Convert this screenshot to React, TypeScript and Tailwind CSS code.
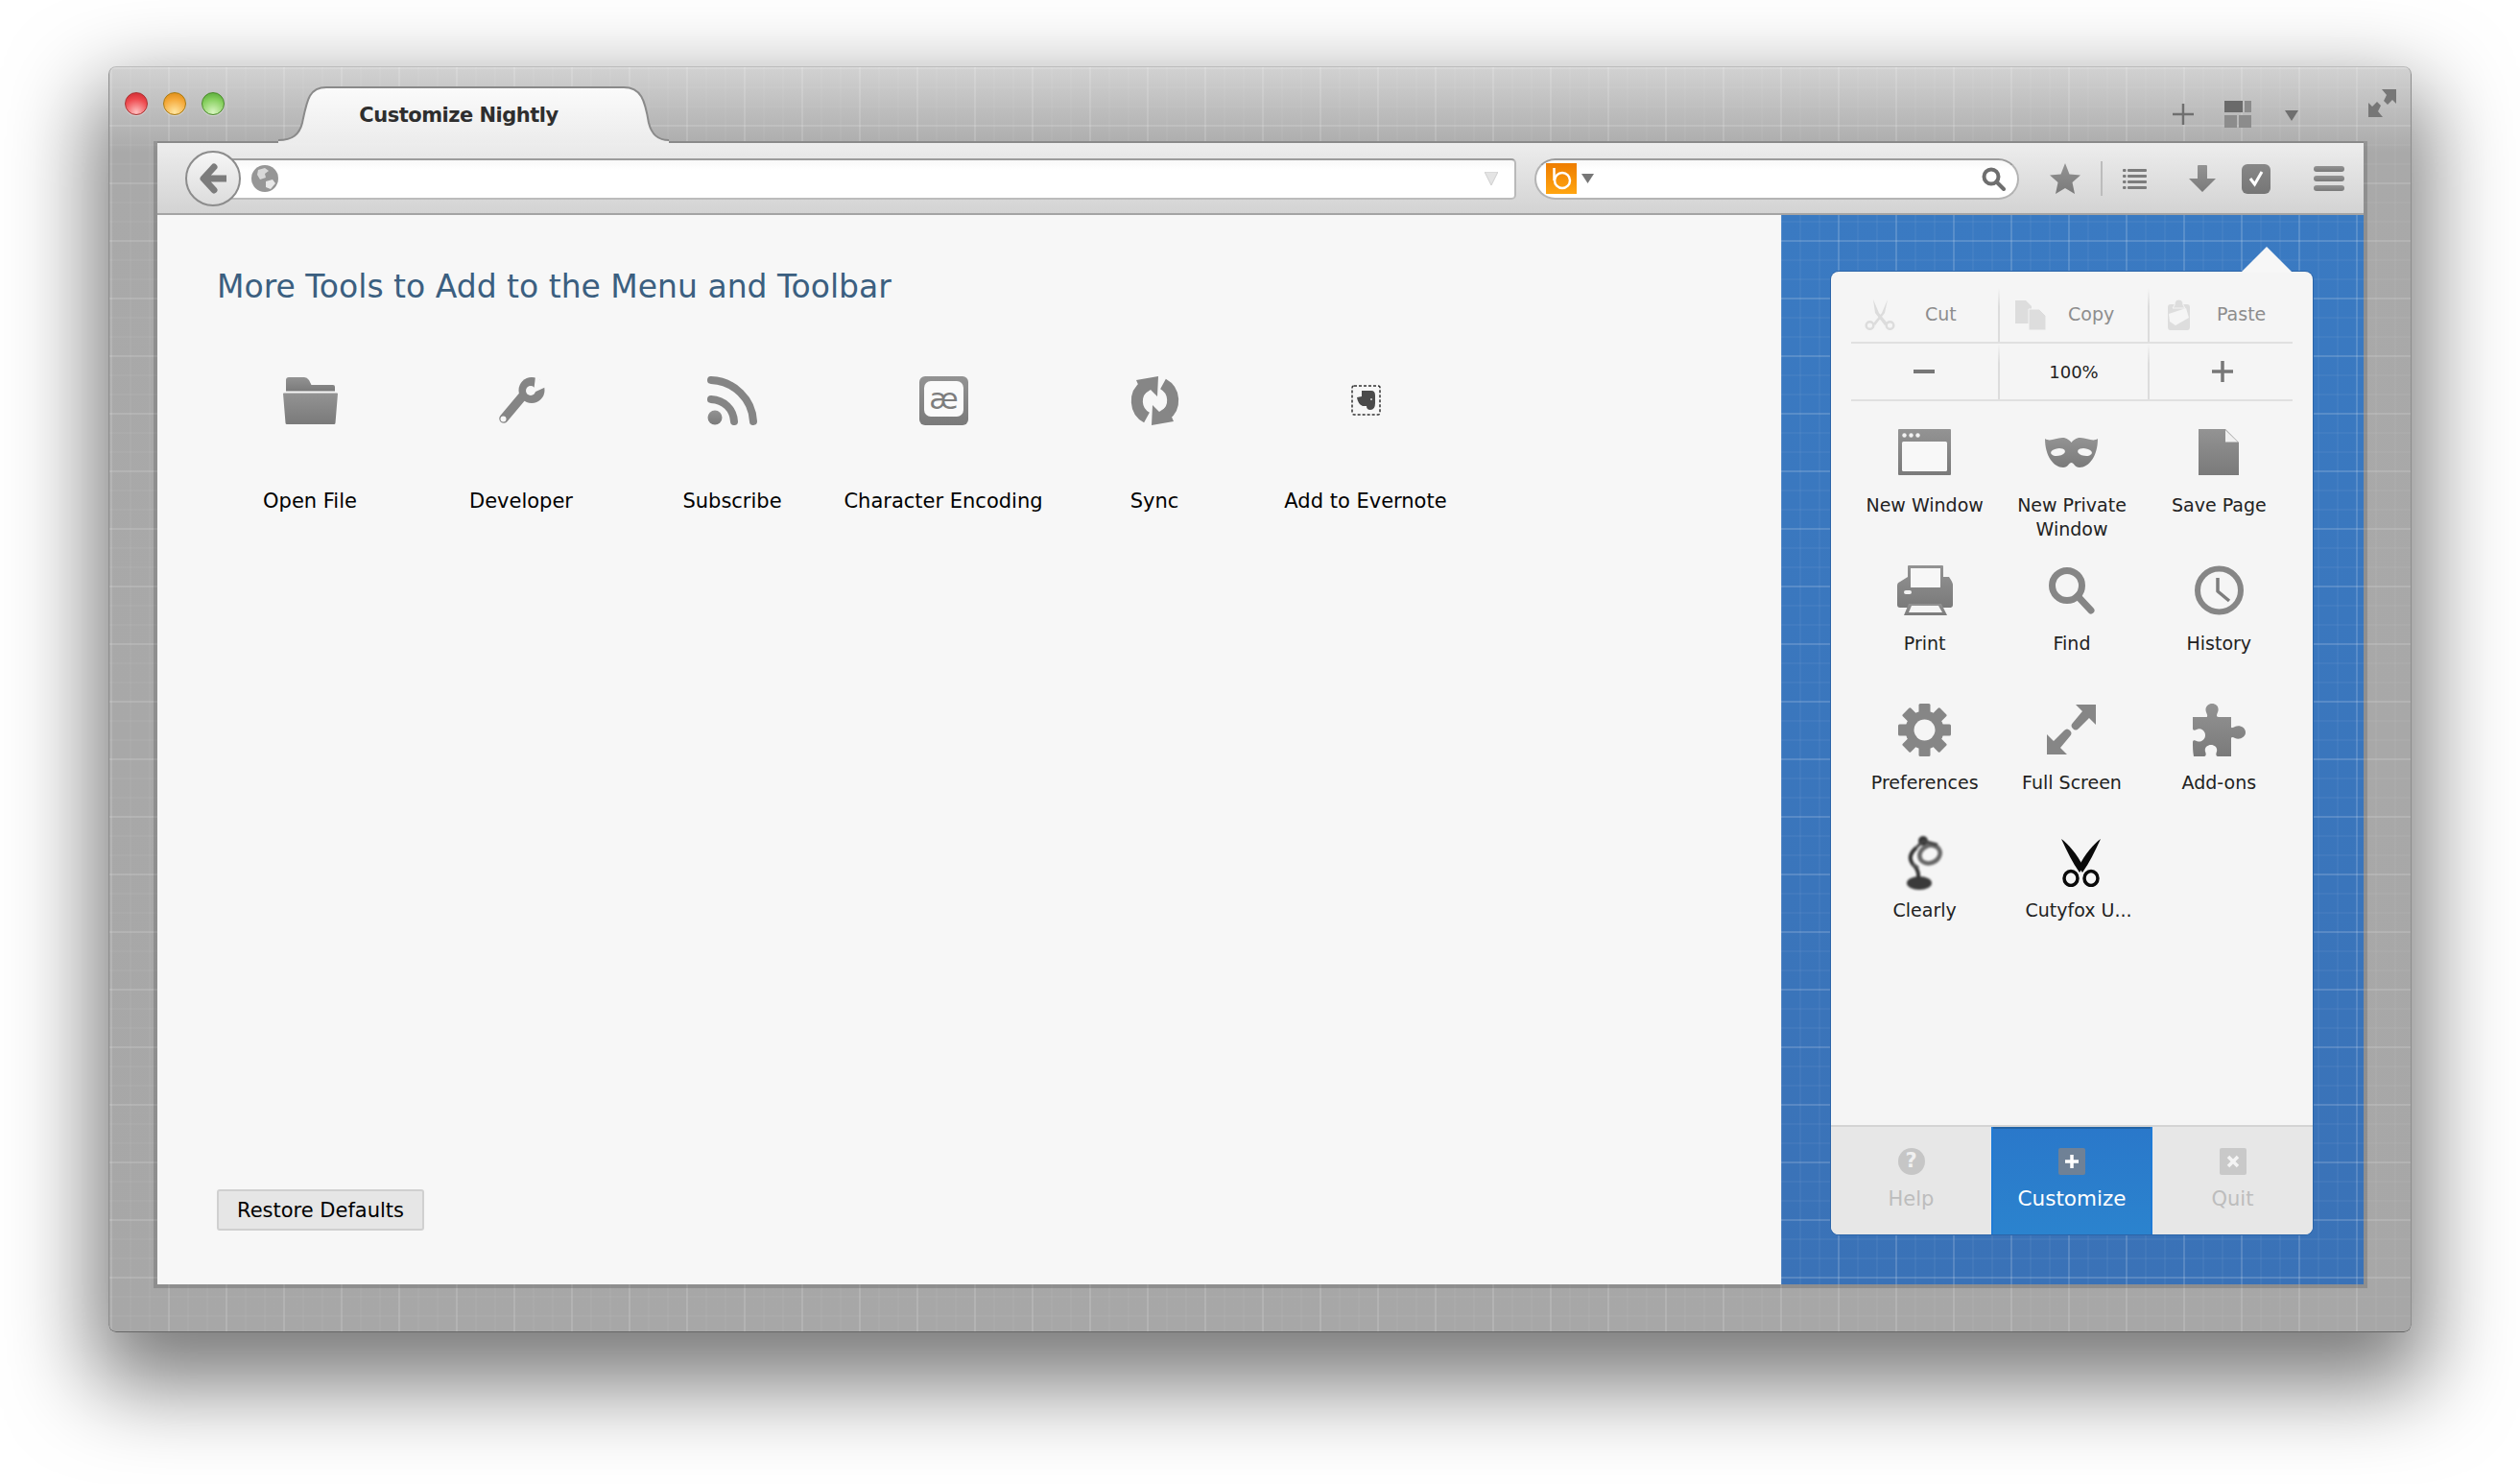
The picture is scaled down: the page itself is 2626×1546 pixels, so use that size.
import React from "react";

const G = "url(#ig)";
const Defs = () => (
  <svg className="absolute h-0 w-0" aria-hidden="true">
    <defs>
      <linearGradient id="ig" x1="0" y1="0" x2="0" y2="1">
        <stop offset="0" stopColor="#939393" />
        <stop offset="1" stopColor="#7a7a7a" />
      </linearGradient>
      <linearGradient id="tabg" x1="0" y1="0" x2="0" y2="1">
        <stop offset="0" stopColor="#fbfbfb" />
        <stop offset="1" stopColor="#ececec" />
      </linearGradient>
      <linearGradient id="bing" x1="0" y1="0" x2="0" y2="1">
        <stop offset="0" stopColor="#ee7d00" />
        <stop offset="1" stopColor="#ffa510" />
      </linearGradient>
    </defs>
  </svg>
);

const S = ({ w, h, children, className }: { w: number; h: number; children: React.ReactNode; className?: string }) => (
  <svg width={w} height={h} viewBox={`0 0 ${w} ${h}`} className={"block shrink-0 " + (className ?? "")}>
    {children}
  </svg>
);

/* content icons */
const Folder = () => (
  <S w={57} h={49}>
    <path d="M3 3Q3 0 6 0H22Q25 0 27 3L29.5 8H52Q54 8 54 10V14.5H3Z" fill={G} />
    <path d="M0 17Q0 16.5 1 16.5H56Q57 16.5 57 17L54.5 47.5Q54.5 49 53 49H4Q2.500 49 2.500 47.500Z" fill={G} />
  </S>
);
const Wrench = () => (
  <S w={49} h={49}>
    <path d="M6 43L27 18" stroke="#858585" strokeWidth="9.500" strokeLinecap="round" />
    <circle cx="35" cy="13.500" r="13.500" fill="#858585" />
    <path d="M39 -1L52 9L37 16Z" fill="#f7f7f7" />
    <circle cx="34" cy="14" r="5" fill="#f7f7f7" />
    <circle cx="5.500" cy="43.500" r="3" fill="#f7f7f7" />
  </S>
);
const Rss = () => (
  <S w={52} h={51}>
    <circle cx="8" cy="43" r="7.500" fill={G} />
    <path d="M4 24C18 25 27 34 28 47" stroke="#858585" strokeWidth="8" strokeLinecap="round" fill="none" />
    <path d="M4 4C28 5 47 24 48 47" stroke="#858585" strokeWidth="8" strokeLinecap="round" fill="none" />
  </S>
);
const Encoding = () => (
  <S w={51} h={51}>
    <rect width="51" height="51" rx="6" fill={G} />
    <rect x="5" y="5" width="41" height="37" rx="7" fill="#fafafa" />
    <text x="25.500" y="34" textAnchor="middle" fontFamily="DejaVu Sans" fontSize="31" fill="#7d7d7d">æ</text>
  </S>
);
const SyncHalf = () => (
  <>
    <path d="M17 43A19.500 19.500 0 0 1 15 10" stroke="#868686" strokeWidth="12" fill="none" />
    <path d="M6 4L29 0L28 21L21 14Q16 17 13 20Z" fill="#868686" />
  </>
);
const Sync = () => (
  <S w={51} h={51}>
    <SyncHalf />
    <g transform="rotate(180 25.5 25.500)">
      <SyncHalf />
    </g>
  </S>
);
const Evernote = () => (
  <S w={31} h={32}>
    <rect x="1" y="1" width="29" height="30" rx="2" fill="none" stroke="#333" strokeWidth="1.500" strokeDasharray="3 2" />
    <path d="M11 6H21Q25 6 25 11V19Q25 26 20 26Q16 26 16 22H12Q7 20 6 13L11 12Z" fill="#4a4a4a" />
    <circle cx="21" cy="15" r="1" fill="#ddd" />
  </S>
);

/* panel icons */
const NewWindow = () => (
  <S w={55} h={48}>
    <rect width="55" height="48" rx="1" fill={G} />
    <rect x="4" y="13" width="47" height="31" rx="1.500" fill="#f8f8f8" />
    <circle cx="6.500" cy="6.500" r="2.200" fill="#f2f2f2" />
    <circle cx="13.500" cy="6.500" r="2.200" fill="#f2f2f2" />
    <circle cx="20.500" cy="6.500" r="2.200" fill="#f2f2f2" />
  </S>
);
const Mask = () => (
  <S w={55} h={32}>
    <path d="M0 2C6 6 12 0 20 1C24 2 26 4 27.500 6C29 4 31 2 35 1C43 0 49 6 55 2C55 20 46 32 36 32C31 32 30 27 27.500 27C25 27 24 32 19 32C9 32 0 20 0 2Z" fill={G} />
    <ellipse cx="13.500" cy="16" rx="7.500" ry="3.800" transform="rotate(-8 13.5 16)" fill="#f5f5f5" />
    <ellipse cx="41.500" cy="16" rx="7.500" ry="3.800" transform="rotate(8 41.5 16)" fill="#f5f5f5" />
  </S>
);
const Page = () => (
  <S w={42} h={48}>
    <path d="M0 0H28L42 14V48H0Z" fill={G} />
    <path d="M28 1L41 13.500H28Z" fill="#f0f0f0" />
  </S>
);
const Printer = () => (
  <S w={58} h={52}>
    <path d="M11 1Q11 0 12 0H47Q48 0 48 1V12H54Q58 18 58 20V41Q58 44 55 44H3Q0 44 0 41V21Q0 18 3 17L11 12Z" fill={G} />
    <rect x="14" y="3" width="31" height="20" fill="#f7f7f7" />
    <rect x="7" y="26" width="8" height="4" rx="2" fill="#f2f2f2" />
    <path d="M12 40H46L52 52H7Z" fill={G} />
    <path d="M15 42H43L47 49H12Z" fill="#f5f5f5" />
  </S>
);
const Find = () => (
  <S w={48} h={49}>
    <circle cx="19" cy="19" r="15.500" fill="none" stroke="#868686" strokeWidth="7" />
    <path d="M30 30L44 45" stroke="#858585" strokeWidth="7" strokeLinecap="round" />
  </S>
);
const Clock = () => (
  <S w={51} h={52}>
    <circle cx="25.500" cy="26" r="22.500" fill="none" stroke="#868686" strokeWidth="6" />
    <path d="M24 13V27L36 37" fill="none" stroke="#7d7d7d" strokeWidth="3.500" strokeLinejoin="round" />
  </S>
);
const Gear = () => (
  <S w={55} h={55}>
    {[0, 45, 90, 135].map((a) => (
      <rect key={a} x="21.500" y="0" width="12" height="55" rx="1.500" fill="#868686" transform={`rotate(${a} 27.5 27.5)`} />
    ))}
    <circle cx="27.500" cy="27.500" r="20" fill="#868686" />
    <circle cx="27.500" cy="27.500" r="11" fill="#f5f5f5" />
  </S>
);
const FullScreen = () => (
  <S w={51} h={52}>
    <path d="M30 0H51V21L44 14L33 25C31 27 29 27 27 25C25 23 25 21 27 19L37 7Z" fill="#868686" />
    <path d="M30 0H51V21L44 14L33 25C31 27 29 27 27 25C25 23 25 21 27 19L37 7Z" fill="#868686" transform="rotate(180 25.5 26)" />
  </S>
);
const Puzzle = () => (
  <S w={55} h={55}>
    <path d="M0 14H14C16 14 15 11 14 9C12 4 16 0 20 0C25 0 28 4 26 9C25 11 24 14 27 14H40V24C40 26 42 25 44 24C49 22 55 25 55 30C55 35 49 38 44 36C42 35 40 34 40 37V55H26C24 55 24 52 25 50C26 46 23 43 19 43C15 43 12 46 13 50C14 52 14 55 12 55H1C0 50 0 45 0 40C0 38 2 38 4 39C9 41 13 37 13 33C13 28 8 25 4 27C2 28 0 28 0 26Z" fill={G} />
  </S>
);
const Lamp = () => (
  <S w={41} h={57} className="blur-[1px]">
    <ellipse cx="15" cy="50" rx="13" ry="7" fill="#3a3a3a" />
    <path d="M14 45Q15 36 8 30Q2 22 12 13" fill="none" stroke="#333" strokeWidth="4" />
    <path d="M8 30L14 34" stroke="#555" strokeWidth="3" />
    <circle cx="19" cy="6" r="5" fill="#333" />
    <ellipse cx="26" cy="20" rx="11" ry="9" transform="rotate(-25 26 20)" fill="none" stroke="#666" strokeWidth="4.500" />
    <path d="M12 13L19 6L34 10" fill="none" stroke="#444" strokeWidth="3" />
  </S>
);
const Cutyfox = () => (
  <S w={41} h={52}>
    <path d="M0 2C7 7 16 17 23 31L19 37C12 27 6 15 0 2Z" fill="#0a0a0a" />
    <path d="M41 2C34 7 25 17 18 31L22 37C29 27 35 15 41 2Z" fill="#0a0a0a" />
    <ellipse cx="10" cy="43" rx="7" ry="7.500" fill="none" stroke="#0a0a0a" strokeWidth="3.500" />
    <ellipse cx="31" cy="43" rx="7" ry="7.500" fill="none" stroke="#0a0a0a" strokeWidth="3.500" />
  </S>
);
const CutIcon = () => (
  <S w={32} h={32}>
    <path d="M9 0L15 14L24 25L21 27L11 14Z" fill="#dcdcdc" />
    <path d="M24 0L18 14L9 25L11 27L21 14Z" fill="#dcdcdc" />
    <circle cx="5.500" cy="27" r="3.800" fill="none" stroke="#dcdcdc" strokeWidth="2.500" />
    <circle cx="26.500" cy="27" r="3.800" fill="none" stroke="#dcdcdc" strokeWidth="2.500" />
  </S>
);
const CopyIcon = () => (
  <S w={32} h={31}>
    <path d="M0 0H11L17 6V24H0Z" fill="#dddddd" />
    <path d="M14 9H25L32 16V31H14Z" fill="#dddddd" stroke="#f5f5f5" strokeWidth="1" />
  </S>
);
const PasteIcon = () => (
  <S w={23} h={32}>
    <rect y="5" width="23" height="27" rx="3" fill="#dddddd" />
    <path d="M7 6Q7 0 11.500 0Q16 0 16 6L18 9H5Z" fill="#dddddd" stroke="#f5f5f5" strokeWidth="1" />
    <path d="M1 15L19 9L22 19L8 27L2 23Z" fill="#f5f5f5" />
  </S>
);

type Tool = { label: React.ReactNode; icon: React.ReactNode; tight?: boolean };

const contentTools: { label: string; icon: React.ReactNode }[] = [
  { label: "Open File", icon: <Folder /> },
  { label: "Developer", icon: <Wrench /> },
  { label: "Subscribe", icon: <Rss /> },
  { label: "Character Encoding", icon: <Encoding /> },
  { label: "Sync", icon: <Sync /> },
  { label: "Add to Evernote", icon: <Evernote /> },
];

const panelTools: Tool[] = [
  { label: "New Window", icon: <NewWindow /> },
  { label: <>New Private<br />Window</>, icon: <Mask /> },
  { label: "Save Page", icon: <Page /> },
  { label: "Print", icon: <Printer /> },
  { label: "Find", icon: <Find /> },
  { label: "History", icon: <Clock /> },
  { label: "Preferences", icon: <Gear /> },
  { label: "Full Screen", icon: <FullScreen /> },
  { label: "Add-ons", icon: <Puzzle /> },
  { label: "Clearly", icon: <Lamp />, tight: true },
  { label: <span className="pl-[14px]">Cutyfox U...</span>, icon: <span className="ml-[19px]"><Cutyfox /></span>, tight: true },
];

const VDivider = () => (
  <div className="w-[2px] shrink-0 self-stretch bg-[linear-gradient(to_bottom,transparent,#dcdcdc_35%,#dcdcdc)]" />
);

export default function App() {
  return (
    <div className="relative h-[1546px] w-[2626px] overflow-hidden bg-white pl-[113px] pt-[69px] font-['DejaVu_Sans',sans-serif]">
      <Defs />
      {/* window */}
      <div className="flex h-[1319px] w-[2400px] flex-col rounded-[8px] pl-[47px] pr-[46px] shadow-[0_40px_90px_15px_rgba(0,0,0,0.52),inset_0_1px_0_#bdbdbd,inset_0_-1px_0_#666666,inset_1px_0_0_#8e8e8e,inset_-1px_0_0_#8e8e8e] bg-[linear-gradient(to_right,rgba(255,255,255,0.1)_2px,transparent_2px),linear-gradient(to_bottom,rgba(255,255,255,0.1)_2px,transparent_2px),linear-gradient(to_right,rgba(255,255,255,0.035)_2px,transparent_2px),linear-gradient(to_bottom,rgba(255,255,255,0.035)_2px,transparent_2px),linear-gradient(to_bottom,#d2d2d2,#a9a9a9_90px,#a7a7a7)] [background-size:60px_60px,60px_60px,20px_20px,20px_20px,100%_100%] [background-position:2px_1px,2px_1px,2px_1px,2px_1px,0_0]">
        {/* title bar */}
        <div className="-ml-[47px] -mr-[46px] flex h-[78px] shrink-0 items-start pl-[17px] pr-[16px]">
          <div className="mt-[27px] flex gap-[16px]">
            <div className="h-[24px] w-[24px] rounded-full border border-[#a33] bg-[radial-gradient(circle_at_50%_90%,#ffc0c0,#ee4a4f_60%,#c8252c)] shadow-[0_1px_0_rgba(255,255,255,0.4)]" />
            <div className="h-[24px] w-[24px] rounded-full border border-[#a97a10] bg-[radial-gradient(circle_at_50%_90%,#ffe6a0,#f5a93a_60%,#d8860f)] shadow-[0_1px_0_rgba(255,255,255,0.4)]" />
            <div className="h-[24px] w-[24px] rounded-full border border-[#4a8a2a] bg-[radial-gradient(circle_at_50%_90%,#d8f5c0,#86cf5e_60%,#4fa332)] shadow-[0_1px_0_rgba(255,255,255,0.4)]" />
          </div>
          <div className="relative z-10 ml-[56px] mt-[21px] flex h-[59px] w-[407px] shrink-0 items-center justify-center pr-[31px] pt-[3px]">
            <svg width="407" height="59" viewBox="0 0 407 59" className="absolute inset-0">
              <path d="M0 56C15 56 22 50 25 38C30 14 32 1 50 1H360C378 1 382 14 386 38C389 50 395 56 407 56V59H0Z" fill="url(#tabg)" />
              <path d="M0 56C15 56 22 50 25 38C30 14 32 1 50 1H360C378 1 382 14 386 38C389 50 395 56 407 56" fill="none" stroke="#8a8a8a" strokeWidth="2" />
            </svg>
            <span className="relative text-[21px] font-bold tracking-[-0.5px] text-[#2e2e2e]">Customize Nightly</span>
          </div>
          <div className="flex-1" />
          <div className="mt-[39px]">
            <S w={22} h={22}>
              <path d="M11 0V22M0 11H22" stroke="#6f6f6f" strokeWidth="2.500" />
            </S>
          </div>
          <div className="ml-[32px] mt-[36px]">
            <S w={28} h={28}>
              <rect x="0" y="0" width="19" height="12" fill="#6a6a6a" />
              <rect x="21" y="0" width="7" height="12" fill="#8c8c8c" />
              <rect x="0" y="15" width="13" height="13" fill="#8c8c8c" />
              <rect x="15" y="15" width="13" height="13" fill="#8c8c8c" />
            </S>
          </div>
          <div className="ml-[35px] mt-[46px]">
            <S w={14} h={11}>
              <path d="M0 0H14L7 11Z" fill="#6f6f6f" />
            </S>
          </div>
          <div className="ml-[73px] mt-[24px]">
            <S w={29} h={29}>
              <path d="M14 0H29V15L25 11L20 16L16 12L19 6Z" fill="#777" />
              <path d="M15 29H0V14L4 18L9 13L13 17L10 23Z" fill="#777" />
            </S>
          </div>
        </div>

        {/* inner frame */}
        <div className="flex h-[1195px] shrink-0 flex-col border-x-4 border-b-4 border-black/15">
          {/* toolbar */}
          <div className="flex h-[77px] shrink-0 items-center border-y-2 border-t-[#8a8a8a] border-b-[#a4a4a4] bg-[linear-gradient(to_bottom,#ededed,#d3d3d3)] pl-[29px] pt-[1px]">
            <div className="relative z-10 flex h-[58px] w-[58px] shrink-0 items-center justify-center rounded-full border-2 border-[#8c8c8c] bg-[linear-gradient(to_bottom,#f6f6f6,#dcdcdc)]">
              <S w={28} h={32}>
                <path d="M27 16H6M15 4L4 16L15 28" fill="none" stroke="#7c7c7c" strokeWidth="7" strokeLinejoin="round" strokeLinecap="round" />
              </S>
            </div>
            <div className="-ml-[21px] flex h-[43px] w-[1350px] shrink-0 items-center rounded-r-[5px] border-y-2 border-r-2 border-t-[#9c9c9c] border-r-[#b9b9b9] border-b-[#bcbcbc] bg-[linear-gradient(to_bottom,#f8f8f8,#ffffff_25%)] pl-[32px] pr-[17px]">
              <S w={28} h={28}>
                <circle cx="14" cy="14" r="14" fill="#969696" />
                <path d="M7 5L14 3L18 6L14 9L15 13L9 15L6 10Z" fill="#d9d9d9" />
                <path d="M15 17L22 15L25 19L20 25L15 23Z" fill="#e8e8e8" />
              </S>
              <div className="flex-1" />
              <S w={14} h={14}>
                <path d="M0 0H14L7 14Z" fill="#e4e4e4" stroke="#cfcfcf" strokeWidth="1" />
              </S>
            </div>
            <div className="ml-[19px] flex h-[43px] w-[505px] shrink-0 items-center rounded-full border-2 border-[#b4b4b4] border-t-[#9c9c9c] bg-[linear-gradient(to_bottom,#f8f8f8,#ffffff_25%)] pl-[10px] pr-[12px]">
              <S w={32} h={32}>
                <rect width="32" height="32" fill="url(#bing)" />
                <circle cx="17" cy="18" r="8" fill="none" stroke="#fff" strokeWidth="2.500" />
                <path d="M8.500 5V18" stroke="#fff" strokeWidth="2.500" />
              </S>
              <div className="ml-[5px]">
                <S w={13} h={10}>
                  <path d="M0 0H13L6.500 10Z" fill="#777" />
                </S>
              </div>
              <div className="flex-1" />
              <S w={25} h={25}>
                <circle cx="10" cy="10" r="7.500" fill="none" stroke="#6e6e6e" strokeWidth="4" />
                <path d="M15.500 15.500L23 23" stroke="#6e6e6e" strokeWidth="4" strokeLinecap="round" />
              </S>
            </div>
            <div className="ml-[32px]">
              <S w={32} h={32}>
                <path d="M16 0L20.500 11.500L32 12.500L23.500 20L26 32L16 26L6 32L8.500 20L0 12.500L11.500 11.500Z" fill={G} />
              </S>
            </div>
            <div className="ml-[21px] h-[36px] w-[2px] bg-[#bcbcbc]" />
            <div className="ml-[21px]">
              <S w={25} h={21}>
                {[0, 6, 12, 18].map((y) => (
                  <g key={y}>
                    <rect x="0" y={y} width="3.500" height="3" rx="1" fill="#7c7c7c" />
                    <rect x="5" y={y} width="20" height="3" rx="1" fill="#7c7c7c" />
                  </g>
                ))}
              </S>
            </div>
            <div className="ml-[44px]">
              <S w={28} h={28}>
                <path d="M9 1Q9 0 10 0H18Q19 0 19 1V14H28L14 28L0 14H9Z" fill={G} />
              </S>
            </div>
            <div className="ml-[27px] flex h-[31px] w-[30px] items-center justify-center rounded-[6px] bg-[linear-gradient(to_bottom,#878787,#767676)]">
              <S w={20} h={18}>
                <path d="M4 9L8.500 15L16 2" fill="none" stroke="#fff" strokeWidth="3" />
              </S>
            </div>
            <div className="ml-[45px]">
              <S w={32} h={26}>
                <rect y="0" width="32" height="6" rx="3" fill={G} />
                <rect y="10" width="32" height="6" rx="3" fill={G} />
                <rect y="20" width="32" height="6" rx="3" fill={G} />
              </S>
            </div>
          </div>

          {/* body */}
          <div className="flex min-h-0 flex-1">
            {/* main content */}
            <div className="flex w-[1692px] shrink-0 flex-col bg-[#f7f7f7] pb-[56px] pl-[62px]">
              <h1 className="mt-[55px] text-[33px] font-normal leading-[40px] text-[#3b5f80]">
                More Tools to Add to the Menu and Toolbar
              </h1>
              <div className="-ml-[13px] mt-[72px] flex">
                {contentTools.map((t) => (
                  <div key={t.label} className="flex w-[220px] flex-col items-center">
                    <div className="flex h-[52px] items-center justify-center">{t.icon}</div>
                    <div className="mt-[66px] whitespace-nowrap text-[21px] leading-[26px] text-black">{t.label}</div>
                  </div>
                ))}
              </div>
              <button className="mt-auto h-[43px] w-[216px] rounded-[3px] border-2 border-[#d0d0d0] bg-[#e6e6e6] pt-[2px] text-[21px] text-black">
                Restore Defaults
              </button>
            </div>

            {/* blue customization area */}
            <div className="flex-1 pl-[52px] pt-[59px] bg-[linear-gradient(to_right,rgba(255,255,255,0.12)_2px,transparent_2px),linear-gradient(to_bottom,rgba(255,255,255,0.12)_2px,transparent_2px),linear-gradient(to_right,rgba(255,255,255,0.04)_2px,transparent_2px),linear-gradient(to_bottom,rgba(255,255,255,0.04)_2px,transparent_2px),linear-gradient(to_bottom,#3a7ac2,#3a72b7)] [background-size:60px_60px,60px_60px,20px_20px,20px_20px,100%_100%] [background-position:59px_26px,59px_26px,19px_6px,19px_6px,0_0]">
              <div className="relative flex h-[1003px] w-[502px] flex-col rounded-[8px] bg-[#f5f5f5] shadow-[0_0_0_1px_#2b64a8]">
                <svg width="54" height="27" viewBox="0 0 54 27" className="absolute -top-[26px] left-[427px]">
                  <path d="M0 27L26 1L27 0L28 1L54 27Z" fill="#f7f7f7" />
                </svg>
                <div className="px-[21px]">
                  <div className="mt-[17px] flex h-[56px] text-[19px] text-[#8d8d8d]">
                    <div className="flex w-[153px] items-center gap-[31px] pl-[14px]">
                      <CutIcon />
                      <span className="-mt-[2px]">Cut</span>
                    </div>
                    <VDivider />
                    <div className="flex w-[154px] items-center gap-[23px] pl-[16px]">
                      <CopyIcon />
                      <span className="-mt-[2px]">Copy</span>
                    </div>
                    <VDivider />
                    <div className="flex flex-1 items-center gap-[28px] pl-[19px]">
                      <PasteIcon />
                      <span className="-mt-[2px]">Paste</span>
                    </div>
                  </div>
                  <div className="h-[2px] bg-[#e0e0e0]" />
                  <div className="flex h-[58px] text-[18px] text-[#222]">
                    <div className="flex w-[153px] items-center justify-center pr-[2px]">
                      <S w={22} h={4}>
                        <rect width="22" height="4" fill="#777" />
                      </S>
                    </div>
                    <VDivider />
                    <div className="flex w-[154px] items-center justify-center">100%</div>
                    <VDivider />
                    <div className="flex flex-1 items-center justify-center pl-[3px]">
                      <S w={22} h={22}>
                        <path d="M11 0V22M0 11H22" stroke="#777" strokeWidth="3.500" />
                      </S>
                    </div>
                  </div>
                  <div className="h-[2px] bg-[#e0e0e0]" />
                  <div className="mt-[25px] grid grid-cols-3 grid-rows-[144px_145px_138px_auto]">
                    {panelTools.map((t, i) => (
                      <div key={i} className="flex flex-col items-center">
                        <div className="flex h-[56px] items-center justify-center">{t.icon}</div>
                        <div className={"whitespace-nowrap text-center text-[19px] leading-[25px] text-[#222] " + (t.tight ? "mt-[10px]" : "mt-[15px]")}>
                          {t.label}
                        </div>
                      </div>
                    ))}
                  </div>
                </div>
                {/* footer */}
                <div className="mt-auto flex h-[114px] overflow-hidden rounded-b-[8px] border-t-2 border-[#d4d4d4] bg-[#e7e7e7] text-[21px] text-[#bdbdbd]">
                  <div className="flex w-[167px] flex-col items-center pt-[22px]">
                    <div className="flex h-[28px] w-[28px] items-center justify-center rounded-full bg-[#c6c6c6] text-[21px] font-bold text-[#f0f0f0]">?</div>
                    <div className="mt-[11px] leading-[28px]">Help</div>
                  </div>
                  <div className="-mt-[2px] flex w-[168px] flex-col items-center border-x-2 border-t-2 border-[#1f7bd6] bg-[linear-gradient(to_bottom,#2a78ca,#2b83ce)] pt-[22px] text-white shadow-[inset_0_2px_0_#2263a6]">
                    <div className="flex h-[28px] w-[28px] items-center justify-center rounded-[2px] bg-[#6f8196]">
                      <S w={16} h={16}>
                        <path d="M8 1V15M1 8H15" stroke="#fff" strokeWidth="3.500" />
                      </S>
                    </div>
                    <div className="mt-[11px] text-[21.5px] leading-[28px]">Customize</div>
                  </div>
                  <div className="flex flex-1 flex-col items-center pt-[22px]">
                    <div className="flex h-[28px] w-[28px] items-center justify-center rounded-[2px] bg-[#c9c9c9]">
                      <S w={16} h={16}>
                        <path d="M3 3L13 13M13 3L3 13" stroke="#f4f4f4" strokeWidth="3.500" />
                      </S>
                    </div>
                    <div className="mt-[11px] leading-[28px]">Quit</div>
                  </div>
                </div>
              </div>
            </div>
          </div>
        </div>
      </div>
    </div>
  );
}
